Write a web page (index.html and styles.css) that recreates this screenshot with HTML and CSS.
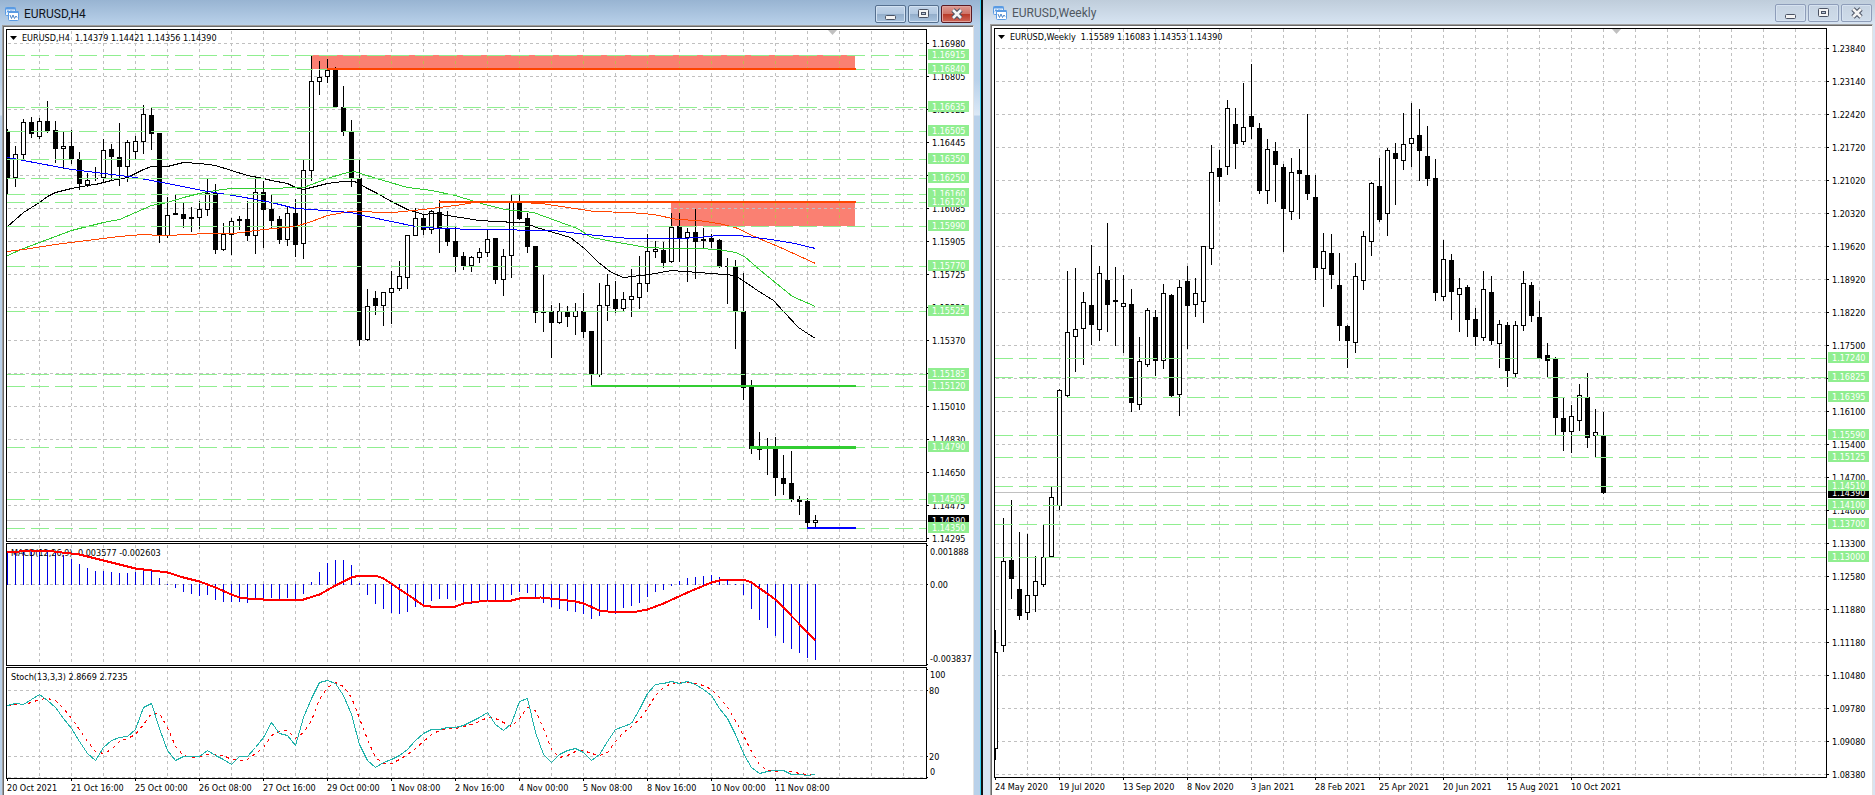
FILE: index.html
```html
<!DOCTYPE html>
<html lang="en">
<head>
<meta charset="utf-8">
<title>EURUSD charts</title>
<link rel="stylesheet" href="styles.css">
</head>
<body>
<svg class="defs" aria-hidden="true">
  <symbol id="app-icon" viewBox="0 0 14 14">
    <rect x="0.5" y="0.5" width="10" height="8" rx="1" fill="#eaf3fd" stroke="#5a9be3"/>
    <path d="M0.5 1.5h10" stroke="#5a9be3" stroke-width="2"/>
    <path d="M2 5.5l1-2 1 2M6 5V3M8 5V3.5" fill="none" stroke="#5a9be3"/>
    <rect x="3.5" y="4.5" width="10" height="9" rx="1" fill="#fff" stroke="#5a9be3"/>
    <path d="M3.500 5h10" stroke="#5a9be3" stroke-width="2"/>
    <path d="M5 8l1.500 3.500 1.500-3.500 1.500 3.500 1.500-2.500 1 1.500" fill="none" stroke="#4a84c8"/>
  </symbol>
  <symbol id="ico-min" viewBox="0 0 14 12">
    <rect x="1.500" y="7.500" width="10" height="4" rx="1" fill="#f4f4f4" stroke="#4a5263"/>
  </symbol>
  <symbol id="ico-max" viewBox="0 0 14 12">
    <rect x="1.500" y="1.500" width="10" height="8" rx="1" fill="#f4f4f4" stroke="#4a5263"/>
    <rect x="4.500" y="4.500" width="4" height="2" fill="#b9c8da" stroke="#4a5263"/>
  </symbol>
  <symbol id="ico-close" viewBox="0 0 14 12">
    <path d="M3 2l8 8M11 2l-8 8" stroke="#4a5263" stroke-width="4.600"/>
    <path d="M3 2l8 8M11 2l-8 8" stroke="#f4f4f4" stroke-width="2.600"/>
  </symbol>
</svg>
<main class="desk">
  <section class="win win-active" aria-labelledby="t1">
    <header class="bar">
      <svg class="app" aria-hidden="true"><use href="#app-icon"/></svg>
      <h2 class="title" id="t1">EURUSD,H4</h2>
      <button class="ctl" type="button" aria-label="Minimize"><svg aria-hidden="true"><use href="#ico-min"/></svg></button>
      <button class="ctl" type="button" aria-label="Maximize"><svg aria-hidden="true"><use href="#ico-max"/></svg></button>
      <button class="ctl ctl-close" type="button" aria-label="Close"><svg aria-hidden="true"><use href="#ico-close"/></svg></button>
    </header>
    <div class="client">
      <div class="pane pane-main">
        <svg class="plot" id="h4-plot"></svg>
        <svg class="axis" id="h4-axis"></svg>
      </div>
      <div class="pane pane-macd">
        <svg class="plot" id="macd-plot"></svg>
        <svg class="axis" id="macd-axis"></svg>
      </div>
      <div class="pane pane-stoch">
        <svg class="plot" id="stoch-plot"></svg>
        <svg class="axis" id="stoch-axis"></svg>
      </div>
      <svg class="dates" id="h4-dates"></svg>
    </div>
  </section>
  <section class="win win-idle" aria-labelledby="t2">
    <header class="bar">
      <svg class="app" aria-hidden="true"><use href="#app-icon"/></svg>
      <h2 class="title" id="t2">EURUSD,Weekly</h2>
      <button class="ctl" type="button" aria-label="Minimize"><svg aria-hidden="true"><use href="#ico-min"/></svg></button>
      <button class="ctl" type="button" aria-label="Maximize"><svg aria-hidden="true"><use href="#ico-max"/></svg></button>
      <button class="ctl" type="button" aria-label="Close"><svg aria-hidden="true"><use href="#ico-close"/></svg></button>
    </header>
    <div class="client">
      <div class="pane pane-main">
        <svg class="plot" id="w1-plot"></svg>
        <svg class="axis" id="w1-axis"></svg>
      </div>
      <svg class="dates" id="w1-dates"></svg>
    </div>
  </section>
</main>
<script src="charts.js"></script>
</body>
</html>
```
FILE: styles.css
```css
* { box-sizing: border-box; }
html, body { height: 100%; margin: 0; }
body {
  font-family: "DejaVu Sans Condensed", "Noto Sans", sans-serif;
  font-size: 9px;
  background: #d7e4f2;
  overflow: hidden;
}
.defs { position: absolute; width: 0; height: 0; }
.desk {
  display: grid;
  grid-template-columns: minmax(0, 983fr) minmax(0, 892fr);
  grid-template-rows: minmax(0, 1fr);
  height: 100%;
}

.win { display: flex; flex-direction: column; min-width: 0; }
.win-active {
  border-right: 2px solid #111;
  box-shadow: inset -1px 0 #35cdee;
  padding: 0 7px 0 2px;
  background: linear-gradient(#98b4d2 0, #b9d1ea 25px, #b9d1ea 80px, #dbe8f6 115px, #b9d1ea 116px);
}
.win-idle {
  padding: 0 2px 0 7px;
  background: linear-gradient(#bfcddb 0, #d7e4f2 24px);
}

.bar { display: flex; align-items: center; gap: 2px; flex: none; }
.win-active .bar { height: 25px; padding: 2px 2px 0 3px; }
.win-idle .bar { height: 24px; padding: 1px 1px 0 3px; }
.app { width: 14px; height: 14px; flex: none; }
.title {
  flex: 1;
  margin: 0 0 0 3px;
  font: 12px/16px Roboto, "Open Sans", sans-serif;
  color: #10151c;
}
.win-idle .title { color: #505862; }

.ctl {
  width: 31px;
  height: 18px;
  padding: 0;
  display: flex;
  align-items: center;
  justify-content: center;
  border: 1px solid #56708f;
  border-radius: 2px;
  box-shadow: inset 0 0 0 1px #d3e2f2;
  background: linear-gradient(#c0d3e8 0, #b3c9e1 48%, #93aecb 52%, #aac4df 100%);
}
.ctl svg { width: 14px; height: 12px; }
.ctl-close {
  border-color: #5a1a22;
  box-shadow: inset 0 0 0 1px #e0a39c;
  background: linear-gradient(#dc9a92 0, #cf7468 48%, #b93a28 52%, #d0685a 100%);
}
.win-idle .ctl {
  border-color: #8e9db9;
  box-shadow: inset 0 0 0 1px #d6e2f0;
  background: linear-gradient(#c6d3e2, #cfdcea);
}

.client {
  flex: 1;
  min-height: 0;
  display: flex;
  flex-direction: column;
  background: #fff;
  border: solid #a0a0a0;
  border-width: 1px 0 0 1px;
  border-right: 1px solid #e3e3e3;
  box-shadow: inset 1px 1px #696969;
  padding: 3px 0 0 3px;
}
.pane { display: flex; flex: none; }
.pane-main { flex: 1; min-height: 0; }
.pane-macd { height: 123px; margin-top: 1px; }
.pane-stoch { height: 112px; margin-top: 1px; }
.plot { flex: 1; min-width: 0; height: 100%; border: 1px solid #000; overflow: hidden; }
.axis { flex: none; width: 46px; height: 100%; overflow: visible; }
.win-idle .axis { width: 45px; }
.dates { width: 100%; height: 16px; flex: none; }
.win-idle .dates { height: 17px; }

.grid { stroke: #c0c0c0; stroke-dasharray: 3 3; }
.level { stroke: #90ee90; stroke-dasharray: 18 6; }
.crisp { shape-rendering: crispEdges; fill: none; }
.ink { fill: #000; }
.tag-ink { fill: #fff; }
.tag { fill: #90ee90; }
.tag-now { fill: #000; }
text { white-space: pre; }
```
FILE: charts.js
```js
const NS = 'http://www.w3.org/2000/svg';
const STEP = 8;

function el(parent, name, attrs, text) {
  const node = document.createElementNS(NS, name);
  for (const key in attrs) node.setAttribute(key, attrs[key]);
  if (text !== undefined) node.textContent = text;
  parent.appendChild(node);
  return node;
}
function layer(id, x, y) {
  return el(document.getElementById(id), 'g', { transform: `translate(${-x} ${-y})` });
}
function hline(g, y, x1, x2, cls) {
  el(g, 'line', { x1, x2, y1: y + 0.5, y2: y + 0.5, class: 'crisp ' + cls });
}
function vgrid(g, x0, x1, y0, y1) {
  for (let x = x0; x <= x1; x += 32)
    el(g, 'line', { x1: x + 0.5, x2: x + 0.5, y1: y0, y2: y1, class: 'crisp grid' });
}
function box(g, x, y, width, height, fill) {
  return el(g, 'rect', { x, y, width, height, fill });
}
function candles(g, x0, rows) {
  rows.trim().split(/\s+/).forEach((row, i) => {
    const [hi, lo, top, bottom, kind] = row.split(',');
    const x = x0 + STEP * i;
    box(g, x, +hi, 1, lo - hi, '#000');
    box(g, x - 2, +top, 5, bottom - top, '#000');
    if (kind === 'w' && bottom - top > 2) box(g, x - 1, +top + 1, 3, bottom - top - 2, '#fff');
  });
}
function curve(g, points, stroke, width = 1, dash = 'none') {
  el(g, 'polyline', {
    points, stroke, class: 'crisp', 'stroke-width': width, 'stroke-dasharray': dash,
    transform: 'translate(0.5 0.5)'
  });
}
function label(g, x, y, text, cls = 'ink') {
  el(g, 'text', { x, y: y + 4, class: cls }, text);
}
function scale(g, x, y0, labels) {
  labels.forEach((text, i) => {
    const y = y0 + 33 * i;
    box(g, x, y, 2, 1, '#000');
    label(g, x + 5, y, text);
  });
}
function tag(g, x, y, text, now) {
  el(g, 'rect', { x, y: y - 6, width: 41, height: 11, class: now ? 'tag-now' : 'tag' });
  label(g, x + 4, y - 1, text, 'tag-ink');
}
function dates(id, x0, y0, labels) {
  const g = layer(id, x0 - 1, y0);
  labels.forEach((text, i) => {
    box(g, x0 + 64 * i, y0, 1, 2, '#000');
    label(g, x0 + 64 * i, y0 + 8, text);
  });
}
function heading(g, x, y, text) {
  el(g, 'path', { d: `M${x} ${y}h7l-3.500 4z`, fill: '#000' });
  label(g, x + 12, y + 1, text);
}

/* ---- EURUSD, H4 ---- */
const h4Candles = `
129,194,132,178,b 146,187,154,178,w 119,159,122,155,w 117,138,122,134,b 118,139,121,137,w
101,133,121,131,b 121,163,130,149,b 132,169,146,149,w 130,164,146,159,b 152,190,159,184,b
173,187,180,185,w 167,181,178,179,b 139,182,150,178,w 144,181,149,157,b 123,186,157,167,b
140,182,142,167,w 136,159,141,152,w 105,154,114,142,w 108,150,115,134,b 133,243,133,236,b
197,238,215,236,w 195,215,213,215,b 203,228,214,219,b 207,232,217,219,b 201,229,209,218,w
179,216,193,210,w 184,254,193,250,b 223,251,234,250,w 218,255,221,235,w 216,230,219,221,b
201,241,219,236,b 177,254,192,236,w 181,248,192,210,b 195,229,209,221,b 216,244,219,240,b
207,246,213,240,w 199,257,213,245,b 160,259,170,244,w 55,181,81,171,w 61,95,77,82,w
59,83,70,77,w 67,107,69,107,b 86,136,107,132,b 120,187,132,179,b 160,346,178,340,b
289,341,306,340,w 291,315,298,306,b 292,326,292,306,w 271,324,288,293,w 261,291,276,289,w
235,289,235,278,w 208,236,218,236,w 215,235,218,230,b 210,234,211,230,w 200,253,212,228,b
211,246,228,242,b 227,272,241,257,b 252,270,256,266,b 256,272,257,266,w 248,263,252,258,w
229,257,239,253,w 238,284,238,280,b 249,296,256,280,w 195,278,202,256,w 195,220,202,219,b
213,253,218,247,b 246,323,246,313,b 275,332,312,313,b 305,358,311,323,b 303,324,311,323,w
306,327,311,317,b 303,335,311,317,w 293,338,311,332,b 331,386,331,374,b 283,377,305,375,w
274,321,285,306,w 281,313,299,309,b 292,311,299,309,w 269,317,296,300,w 256,309,283,298,w
234,292,251,284,w 241,258,249,252,w 242,268,250,263,b 213,263,227,262,w 213,262,226,239,b
228,282,232,238,w 209,279,232,242,b 228,248,239,241,b 234,248,238,242,b 239,268,240,267,b
258,304,266,267,b 260,349,267,311,b 273,400,311,388,b 380,454,386,449,b 432,460,448,450,b
438,475,448,449,b 437,496,449,478,b 455,495,478,484,b 451,502,483,500,b 496,515,499,502,b
498,528,501,523,b 515,528,520,523,w`;
const maBlack = '7,226 23,212 39,202 47,196 55,192 71,188 87,185 95,184 111,180 127,177 143,169 151,166 167,166 183,162 199,163 215,165 231,170 247,175 263,178 271,180 287,183 295,187 303,189 311,187 327,183 343,181 354,181 367,188 375,192 391,201 407,209 423,214 433,213 447,215 460,217 478,220 515,222 523,222 536,227 570,237 584,248 598,262 611,272 623,277 649,274 671,270 711,273 735,275 757,290 773,300 783,311 798,327 807,333 815,338';
const maGreen = '7,255 23,248 39,242 55,236 71,230 87,226 103,222 119,219 135,212 151,205 167,202 183,197 199,193 215,190 231,188 263,188 303,187 327,178 343,173 354,171 363,174 383,180 407,187 431,190 455,195 474,201 488,205 505,209 533,212 577,228 591,237 618,242 646,247 671,248 698,248 717,249 735,252 744,256 760,270 792,296 815,306';
const maOrange = '7,251 23,249 55,244 87,240 119,236 143,234 160,235 193,234 200,233 233,233 263,229 295,226 311,221 327,215 349,211 393,212 423,209 455,205 474,202 520,202 541,203 594,211 629,212 653,214 677,219 698,220 718,223 735,227 756,237 780,247 815,263';
const maBlue = '7,157 39,163 71,169 103,173 135,177 151,180 167,183 207,191 239,196 271,202 295,208 311,209 350,212 367,216 391,221 415,226 439,228 479,229 553,230 586,234 629,238 680,238 698,237 718,235 739,235 770,239 794,243 815,248';
const h4Levels = [[55, '1.16915'], [69, '1.16840'], [107, '1.16635'], [131, '1.16505'], [159, '1.16350'],
  [178, '1.16250'], [194, '1.16160'], [202, '1.16120'], [226, '1.15990'], [266, '1.15770'], [311, '1.15525'],
  [374, '1.15185'], [386, '1.15120'], [447, '1.14790'], [499, '1.14505'], [528, '1.14350']];

(function drawH4() {
  const g = layer('h4-plot', 7, 30);
  for (let y = 43; y <= 538; y += 33) hline(g, y, 8, 3000, 'grid');
  vgrid(g, 39, 903, 31, 3000);
  box(g, 7, 520, 3000, 1, '#c0c0c0');
  box(g, 311, 55, 544, 14, '#fa8072');
  box(g, 671, 202, 184, 24, '#fa8072');
  hline(g, 208, 674, 855, 'grid');
  for (let x = 327; x < 855; x += 32)
    for (const [top, bottom] of x > 671 ? [[55, 68], [203, 226]] : [[55, 68]])
      el(g, 'line', { x1: x + 0.5, x2: x + 0.5, y1: top, y2: bottom, class: 'crisp', stroke: '#c8b450', 'stroke-dasharray': '3 3' });
  candles(g, 7, h4Candles);
  curve(g, maBlack, '#000');
  curve(g, maGreen, '#32cd32');
  curve(g, maOrange, '#ff4500');
  curve(g, maBlue, '#0000ff');
  h4Levels.forEach(([y]) => hline(g, y, 7, 3000, 'level'));
  box(g, 327, 68, 529, 2, '#ff4500');
  box(g, 439, 201, 417, 2, '#ff4500');
  box(g, 591, 385, 265, 2, '#32cd32');
  box(g, 750, 446, 106, 3, '#32cd32');
  box(g, 807, 527, 49, 2, '#0000ff');
  el(g, 'path', { d: 'M828 30h9l-4.500 5z', fill: '#c0c0c0' });
  heading(g, 10, 36, 'EURUSD,H4  1.14379 1.14421 1.14356 1.14390');

  const a = layer('h4-axis', 927, 29);
  scale(a, 927, 43, ['1.16980', '1.16805', '1.16625', '1.16445', '1.16265', '1.16085', '1.15905', '1.15725',
    '1.15550', '1.15370', '1.15190', '1.15010', '1.14830', '1.14650', '1.14475', '1.14295']);
  tag(a, 928, 521, '1.14390', true);
  h4Levels.forEach(([y, text]) => tag(a, 928, y, text));
})();

/* ---- MACD ---- */
const macdBars = [552, 552, 551, 551, 551, 552, 553, 555, 559, 564, 568, 571, 571, 572, 573, 573, 572, 570, 571, 578,
  584, 587, 591, 593, 595, 594, 599, 601, 601, 601, 602, 597, 599, 597, 598, 597, 598, 593, 582, 572,
  563, 560, 560, 565, 583, 594, 603, 608, 612, 613, 611, 606, 604, 600, 598, 598, 599, 601, 603, 601,
  599, 599, 599, 594, 591, 592, 597, 602, 606, 608, 610, 611, 613, 618, 615, 611, 613, 607, 605, 602,
  596, 591, 589, 585, 581, 578, 577, 576, 575, 577, 580, 584, 594, 608, 619, 627, 635, 642, 648, 652,
  657, 659];
const macdSignal = '7,552 30,550 53,551 79,554 87,556 103,560 135,568 151,570 167,572 183,577 199,581 215,587 231,594 239,597 247,598 263,599 303,599 319,594 335,585 351,577 359,575 375,575 383,578 407,594 423,605 430,606 455,606 463,603 487,600 511,600 519,598 540,597 559,599 575,601 583,603 599,610 607,611 631,612 647,609 663,603 687,592 711,582 719,580 727,579 743,579 751,582 775,599 815,640';

(function drawMacd() {
  const g = layer('macd-plot', 7, 544);
  vgrid(g, 39, 903, 545, 665);
  hline(g, 584, 8, 3000, 'grid');
  macdBars.forEach((y, i) => box(g, 7 + STEP * i, Math.min(y, 584), 1, Math.abs(y - 584) + 1, '#0000e6'));
  label(g, 11, 552, 'MACD(12,26,9) -0.003577 -0.002603');
  curve(g, macdSignal, '#ff0000', 2);
  const a = layer('macd-axis', 927, 543);
  box(a, 927, 545, 1, 1, '#000');
  box(a, 927, 584, 1, 1, '#000');
  box(a, 927, 664, 1, 1, '#000');
  label(a, 930, 551, '0.001888');
  label(a, 930, 584, '0.00');
  label(a, 930, 658, '-0.003837');
})();

/* ---- Stochastic ---- */
const stochMain = [705, 703, 704, 699, 694, 700, 707, 718, 728, 741, 753, 760, 747, 740, 737, 736, 729, 707, 703, 728,
  750, 760, 756, 756, 756, 750, 755, 759, 764, 756, 756, 747, 737, 722, 733, 735, 745, 717, 698, 682,
  680, 683, 695, 714, 744, 760, 767, 762, 759, 755, 749, 740, 733, 729, 729, 727, 727, 725, 721, 717,
  712, 724, 730, 723, 701, 698, 732, 754, 762, 754, 750, 748, 752, 760, 754, 741, 729, 726, 723, 709,
  693, 684, 683, 681, 683, 681, 684, 689, 695, 708, 718, 734, 753, 767, 773, 771, 770, 770, 774, 774,
  775, 774];

(function drawStoch() {
  const g = layer('stoch-plot', 7, 668);
  vgrid(g, 39, 903, 671, 778);
  [690, 756, 777].forEach(y => hline(g, y, 8, 3000, 'grid'));
  const at = i => stochMain[Math.max(i, 0)];
  const path = f => stochMain.map((_, i) => `${7 + STEP * i},${Math.round(f(i))}`).join(' ');
  curve(g, path(i => (at(i) + at(i - 1) + at(i - 2)) / 3), '#ff0000', 1, '3 4');
  curve(g, path(at), '#20b2aa');
  label(g, 11, 676, 'Stoch(13,3,3) 2.8669 2.7235');
  const a = layer('stoch-axis', 927, 667);
  [669, 690, 756, 777].forEach(y => box(a, 927, y, 1, 1, '#000'));
  label(a, 930, 674, '100');
  label(a, 929, 690, '80');
  label(a, 929, 756, '20');
  label(a, 930, 771, '0');
})();
dates('h4-dates', 7, 779, ['20 Oct 2021', '21 Oct 16:00', '25 Oct 00:00', '26 Oct 08:00', '27 Oct 16:00', '29 Oct 00:00',
  '1 Nov 08:00', '2 Nov 16:00', '4 Nov 00:00', '5 Nov 08:00', '8 Nov 16:00', '10 Nov 00:00', '11 Nov 08:00']);

/* ---- EURUSD, Weekly ---- */
const w1Candles = `
630,760,652,749,w 518,652,561,646,w 500,599,560,579,b 532,620,589,616,b 534,620,595,613,w
556,612,581,596,w 525,587,557,585,w 487,557,497,557,w 389,510,390,506,w 271,397,332,396,w
268,372,329,337,w 292,365,302,329,w 245,345,305,325,b 266,341,273,330,w 223,332,280,305,b
267,346,300,302,b 275,353,303,307,w 289,412,304,403,b 337,410,361,405,w 308,367,310,365,w
310,376,317,361,b 284,369,293,361,w 294,397,295,396,b 280,416,287,395,w 266,349,281,306,b
278,317,293,305,w 246,323,246,302,w 145,265,172,249,w 150,202,168,177,b 100,175,108,167,w
108,169,124,144,b 83,145,127,142,w 64,139,116,127,b 123,194,128,191,b 139,204,149,191,w
142,202,151,165,b 164,252,167,209,b 158,220,172,212,w 149,219,170,174,b 114,200,175,194,b
175,280,197,268,b 233,307,251,269,w 234,289,253,275,b 253,341,285,326,b 325,368,326,341,b
263,353,276,343,w 231,290,236,281,w 182,256,183,242,w 158,222,186,220,b 148,236,150,214,w
143,205,153,159,b 113,170,144,161,w 103,167,138,144,w 109,181,135,151,b 126,186,156,179,b
159,301,178,293,b 240,301,259,297,w 254,320,260,292,b 278,332,288,295,w 285,337,287,320,b
308,346,319,337,b 271,341,289,338,w 276,345,292,341,b 320,368,324,344,w 322,387,325,371,b
321,377,325,374,w 271,331,283,326,w 282,322,285,316,b 301,359,317,359,b 343,377,355,361,b
357,435,359,418,b 398,451,418,432,b 405,453,416,432,w 384,431,395,421,w 373,448,397,438,b
409,457,432,436,w 412,494,435,493,b`;
const w1Levels = [[358, '1.17240'], [377, '1.16825'], [397, '1.16395'], [435, '1.15590'], [457, '1.15125'],
  [486, '1.14510'], [505, '1.14100'], [524, '1.13700'], [557, '1.13000']];

(function drawWeekly() {
  const g = layer('w1-plot', 995, 29);
  for (let y = 48; y <= 774; y += 33) hline(g, y, 996, 4000, 'grid');
  vgrid(g, 1027, 1795, 29, 3000);
  box(g, 995, 492, 3000, 1, '#c0c0c0');
  candles(g, 995, w1Candles);
  w1Levels.forEach(([y]) => hline(g, y, 995, 4000, 'level'));
  el(g, 'path', { d: 'M1612 29h9l-4.500 5z', fill: '#c0c0c0' });
  heading(g, 998, 35, 'EURUSD,Weekly  1.15589 1.16083 1.14353 1.14390');
  const a = layer('w1-axis', 1827, 28);
  scale(a, 1827, 48, ['1.23840', '1.23140', '1.22420', '1.21720', '1.21020', '1.20320', '1.19620', '1.18920',
    '1.18220', '1.17500', '1.16800', '1.16100', '1.15400', '1.14700', '1.14000', '1.13300', '1.12580', '1.11880',
    '1.11180', '1.10480', '1.09780', '1.09080', '1.08380']);
  tag(a, 1828, 493, '1.14390', true);
  w1Levels.forEach(([y, text]) => tag(a, 1828, y, text));
})();
dates('w1-dates', 995, 778, ['24 May 2020', '19 Jul 2020', '13 Sep 2020', '8 Nov 2020', '3 Jan 2021', '28 Feb 2021',
  '25 Apr 2021', '20 Jun 2021', '15 Aug 2021', '10 Oct 2021']);
```
